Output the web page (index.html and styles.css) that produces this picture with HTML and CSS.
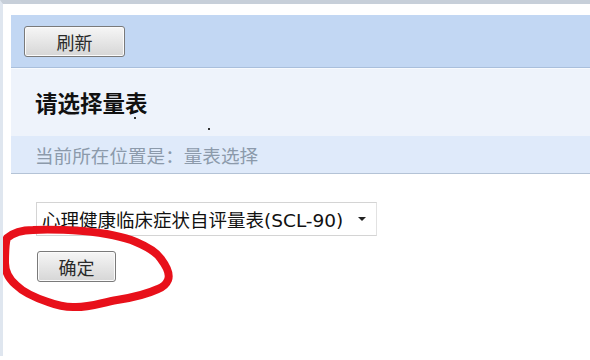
FILE: index.html
```html
<!DOCTYPE html>
<html>
<head>
<meta charset="utf-8">
<link rel="stylesheet" href="styles.css">
</head>
<body>
<div class="frame">
  <div class="page">
    <div class="toolbar">
      <button class="btn btn-refresh">刷新</button>
    </div>
    <div class="title-bar">
      <h1 class="title">请选择量表</h1>
      <span class="dot dot1"></span>
      <span class="dot dot2"></span>
    </div>
    <div class="crumb">当前所在位置是：量表选择</div>
    <div class="content">
      <div class="select">
        <span class="select-text">心理健康临床症状自评量表(SCL-90)</span>
        <span class="caret"></span>
      </div>
      <div class="ok-wrap">
        <button class="btn btn-ok">确定</button>
        <svg class="circle" width="180" height="100" viewBox="0 0 180 100">
          <path d="M7 15 C 14 9, 22 7, 33 7 C 50 6, 68 7, 83 8 C 105 10, 122 13, 136 19 C 148 24, 157 30, 161 36 C 167 44, 170 52, 168 57 C 166 62, 163 64, 158 66 C 145 72, 130 75, 117 77 C 100 80, 88 85, 73 84 C 64 84, 56 82, 48 79 C 36 75, 24 70, 16 62 C 9 56, 5 48, 5 40 C 5 30, 5 21, 7 15 Z" fill="none" stroke="#e8101a" stroke-width="8" stroke-linecap="round" stroke-linejoin="round"/>
        </svg>
      </div>
    </div>
  </div>
</div>
</body>
</html>
```
FILE: styles.css
```css
html, body {
  margin: 0;
  padding: 0;
  background: #ffffff;
  font-family: "Noto Sans CJK SC", "DejaVu Sans", sans-serif;
}
.frame {
  border-top: 4px solid #c7cfd9;
  border-left: 3px solid #dfe6ef;
  height: 356px;
  box-sizing: border-box;
  overflow: hidden;
}
.page {
  margin-top: 11px;
  margin-left: 8px;
}
.toolbar {
  height: 53px;
  background: #c2d7f3;
  border-bottom: 1px solid #a9bfdc;
  display: flex;
  align-items: flex-start;
  padding-left: 13px;
  padding-top: 11px;
  box-sizing: border-box;
}
.btn {
  font-family: "Noto Sans CJK SC", sans-serif;
  font-size: 18px;
  color: #2a2a2a;
  border: 1px solid #7a7a7a;
  border-radius: 3px;
  background: linear-gradient(#f6f6f6, #e6e6e6 50%, #d6d6d6);
  padding: 0;
  line-height: 1;
  box-shadow: inset 0 0 0 1px #fbfbfb;
}
.btn-refresh {
  width: 101px;
  height: 31px;
}
.title-bar {
  position: relative;
  height: 68px;
  background: #eef3fb;
  padding-left: 24px;
  display: flex;
  align-items: center;
  border-top: 1px solid #f7fafe;
  box-sizing: border-box;
}
.title {
  margin: 0;
  font-size: 22.5px;
  font-weight: bold;
  color: #111;
  margin-top: -2px;
}
.dot {
  position: absolute;
  width: 2px;
  height: 2px;
  background: #333;
}
.dot1 { left: 123px; top: 48px; }
.dot2 { left: 197px; top: 59px; }
.crumb {
  height: 38px;
  background: #dfeafa;
  border-bottom: 1px solid #b4c3d6;
  padding-left: 24px;
  font-size: 18.6px;
  color: #8c9aab;
  display: flex;
  align-items: center;
  box-sizing: border-box;
}
.content {
  padding-left: 25px;
  padding-top: 28px;
}
.select {
  width: 341px;
  height: 34px;
  border: 1px solid #d4d4d4;
  border-right-color: #e2e2e2;
  box-sizing: border-box;
  display: flex;
  align-items: center;
  padding-left: 5px;
  padding-right: 10px;
}
.select-text {
  font-family: "DejaVu Sans", "Noto Sans CJK SC", sans-serif;
  font-size: 18.5px;
  color: #111;
  flex: 1;
  white-space: nowrap;
}
.caret {
  width: 0;
  height: 0;
  border-left: 4px solid transparent;
  border-right: 4px solid transparent;
  border-top: 4px solid #222;
}
.ok-wrap {
  position: relative;
  margin-top: 15px;
  margin-left: 1px;
}
.btn-ok {
  width: 79px;
  height: 31px;
}
.circle {
  position: absolute;
  left: -37px;
  top: -28px;
  pointer-events: none;
}
```
